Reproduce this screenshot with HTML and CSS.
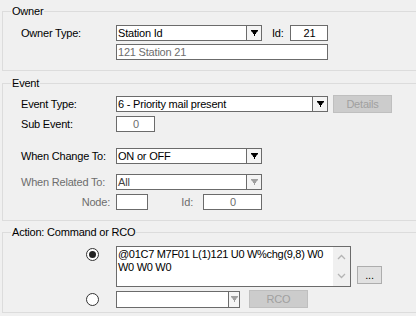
FILE: index.html
```html
<!DOCTYPE html>
<html>
<head>
  <title>Event Action</title>
  <link rel="stylesheet" href="styles.css">
</head>
<body>
  <fieldset class="group owner">
    <legend>Owner</legend>
    <div class="row">
      <span class="caption">Owner Type:</span>
      <div class="combo owner-combo">
        <span class="value">Station Id</span>
        <span class="drop"><svg width="7" height="6" viewBox="0 0 7 6"><path d="M0 0H7V1L5 3V4H4V6H3V4H2V3L0 1Z"/></svg></span>
      </div>
      <span class="id-caption">Id:</span>
      <div class="field id-field">21</div>
    </div>
    <div class="row gap3">
      <span class="caption"></span>
      <div class="field owner-name disabled">121 Station 21</div>
    </div>
  </fieldset>

  <fieldset class="group event">
    <legend>Event</legend>
    <div class="row tall">
      <span class="caption">Event Type:</span>
      <div class="combo event-combo">
        <span class="value">6 - Priority mail present</span>
        <span class="drop"><svg width="7" height="6" viewBox="0 0 7 6"><path d="M0 0H7V1L5 3V4H4V6H3V4H2V3L0 1Z"/></svg></span>
      </div>
      <button class="btn off details">Details</button>
    </div>
    <div class="row gap3">
      <span class="caption">Sub Event:</span>
      <div class="field sub-field disabled center">0</div>
    </div>
    <div class="row gap16">
      <span class="caption">When Change To:</span>
      <div class="combo change-combo">
        <span class="value">ON or OFF</span>
        <span class="drop"><svg width="7" height="6" viewBox="0 0 7 6"><path d="M0 0H7V1L5 3V4H4V6H3V4H2V3L0 1Z"/></svg></span>
      </div>
    </div>
    <div class="row gap10">
      <span class="caption disabled">When Related To:</span>
      <div class="combo change-combo">
        <span class="value related">All</span>
        <span class="drop off"><svg width="7" height="6" viewBox="0 0 7 6"><path d="M0 0H7V1L5 3V4H4V6H3V4H2V3L0 1Z"/></svg></span>
      </div>
    </div>
    <div class="row gap4">
      <span class="caption disabled right">Node:</span>
      <div class="field node-field"></div>
      <span class="node-id disabled">Id:</span>
      <div class="field node-id-field disabled center">0</div>
    </div>
  </fieldset>

  <fieldset class="group action">
    <legend>Action: Command or RCO</legend>
    <div class="row cmd-row">
      <span class="radio checked"></span>
      <div class="memo">
        <div class="memo-text">@01C7 M7F01 L(1)121 U0 W%chg(9,8) W0 W0 W0 W0</div>
        <div class="memo-scroll">
          <svg width="9" height="6" viewBox="0 0 9 6"><path d="M1 5L4.5 1.5L8 5" fill="none" stroke="#b4b4b4" stroke-width="1.3"/></svg>
          <svg width="9" height="6" viewBox="0 0 9 6"><path d="M1 1L4.5 4.5L8 1" fill="none" stroke="#b4b4b4" stroke-width="1.3"/></svg>
        </div>
      </div>
      <button class="btn more">...</button>
    </div>
    <div class="row tall gap3">
      <span class="radio"></span>
      <div class="combo rco-combo">
        <span class="value"></span>
        <span class="drop off narrow"><svg width="7" height="6" viewBox="0 0 7 6"><path d="M0 0H7V1L5 3V4H4V6H3V4H2V3L0 1Z"/></svg></span>
      </div>
      <button class="btn off rco">RCO</button>
    </div>
  </fieldset>
</body>
</html>
```

FILE: styles.css
```css
* {
  box-sizing: border-box;
}
html, body {
  margin: 0;
}
body {
  width: 416px;
  height: 316px;
  overflow: hidden;
  padding-top: 5px;
  background-color: #f0f0f0;
  color: #000;
  font-family: "Liberation Sans", Arial, sans-serif;
  font-size: 11px;
  letter-spacing: -0.2px;
}
.group {
  margin: 0 -10px 0 2px;
  min-width: 0;
  border: 1px solid #dcdcdc;
  padding: 0;
}
legend {
  margin-left: 8px;
  padding: 0 1px;
  line-height: 13px;
}
.owner {
  padding: 7px 0 10px 0;
}
.event {
  margin-top: 6px;
  padding: 5px 0 10px 0;
}
.action {
  margin-top: 5px;
  padding: 7px 0 4px 0;
}
.row {
  display: flex;
  align-items: center;
  height: 16px;
  margin-left: 18px;
}
.row.tall {
  height: 18px;
}
.gap3 { margin-top: 3px; }
.gap4 { margin-top: 4px; }
.gap10 { margin-top: 10px; }
.gap16 { margin-top: 16px; }
.caption {
  width: 95px;
  flex: none;
}
.caption.right {
  text-align: right;
  padding-right: 6px;
}
.disabled {
  color: #6d6d6d;
}
.center {
  text-align: center;
}
.field {
  height: 16px;
  border: 1px solid #6b6b6b;
  background-color: #fff;
  padding-left: 1px;
  line-height: 14px;
  white-space: nowrap;
}
.combo {
  display: flex;
  height: 16px;
  border: 1px solid #6b6b6b;
  background-color: #fff;
}
.combo .value {
  flex: 1;
  padding-left: 1px;
  line-height: 14px;
  white-space: nowrap;
  overflow: hidden;
}
.combo .related {
  color: #444;
}
.drop {
  width: 15px;
  flex: none;
  display: flex;
  align-items: center;
  justify-content: center;
  border-left: 1px solid #6b6b6b;
  background-color: #f4f4f4;
}
.drop svg {
  fill: #000;
}
.drop.off svg {
  fill: #a0a0a0;
}
.drop.narrow {
  width: 11px;
}
.owner-combo { width: 146px; }
.id-caption {
  width: 18px;
  margin-left: 10px;
}
.id-field {
  width: 38px;
  text-align: center;
}
.owner-name { width: 212px; }
.event-combo { width: 212px; }
.sub-field { width: 39px; }
.change-combo { width: 146px; }
.node-field { width: 32px; }
.node-id {
  width: 55px;
  text-align: right;
  padding-right: 10px;
}
.node-id-field { width: 59px; }
.btn {
  height: 18px;
  margin: 0;
  padding: 0;
  font-family: inherit;
  font-size: 11px;
  letter-spacing: inherit;
  border: 1px solid #adadad;
  background-color: #e1e1e1;
  color: #000;
}
.btn.off {
  border-color: #bfbfbf;
  background-color: #cccccc;
  color: #a0a0a0;
}
.details {
  width: 59px;
  margin-left: 5px;
}
.cmd-row {
  height: 41px;
  align-items: flex-start;
}
.action .row {
  margin-left: 83px;
}
.radio {
  width: 13px;
  height: 13px;
  flex: none;
  margin-right: 17px;
  border: 1px solid #333;
  border-radius: 50%;
  background-color: #fff;
  display: flex;
  align-items: center;
  justify-content: center;
}
.cmd-row .radio {
  margin-top: 2px;
}
.radio.checked::after {
  content: "";
  width: 7px;
  height: 7px;
  border-radius: 50%;
  background-color: #222;
}
.memo {
  width: 235px;
  height: 41px;
  display: flex;
  border: 1px solid #6b6b6b;
  background-color: #fff;
}
.memo-text {
  flex: 1;
  padding: 1px 0 0 1px;
  line-height: 13px;
  letter-spacing: -0.3px;
}
.memo-scroll {
  width: 17px;
  flex: none;
  display: flex;
  flex-direction: column;
  justify-content: space-between;
  align-items: center;
  padding: 7px 0 7px 0;
  background-color: #f0f0f0;
}
.more {
  width: 25px;
  margin: 20px 0 0 6px;
}
.rco-combo {
  width: 124px;
  height: 17px;
}
.rco {
  width: 59px;
  margin-left: 9px;
}
```
